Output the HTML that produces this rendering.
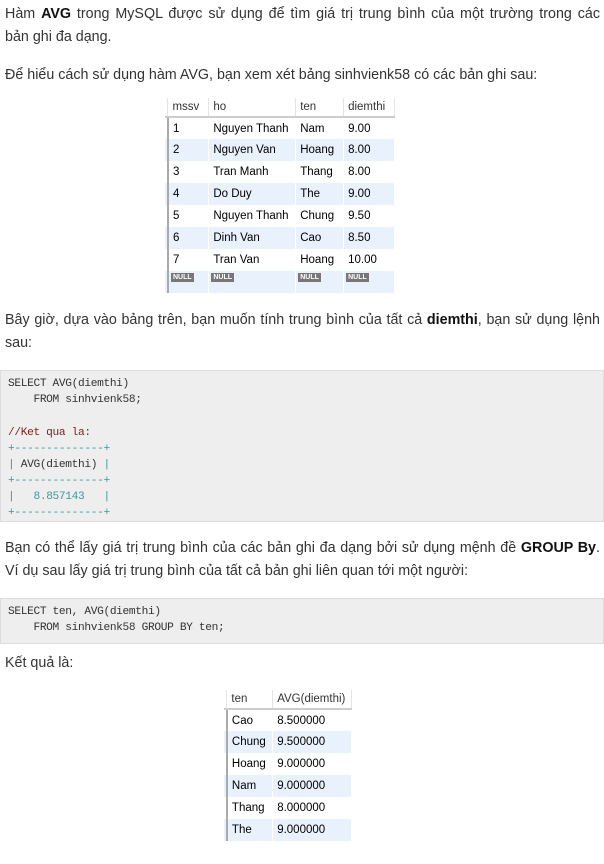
<!DOCTYPE html>
<html><head><meta charset="utf-8"><style>
body{margin:0;width:604px;height:864px;background:#fff;position:relative;font-family:"Liberation Sans",sans-serif;color:#333;overflow:hidden}
.l{position:absolute;left:5px;font-size:14.3px;white-space:nowrap;line-height:18px}
.j{width:595px;text-align:justify;text-align-last:justify}
b{color:#111}
.code{position:absolute;left:0;width:602px;background:#eee;border:1px solid #ddd;font-family:"Liberation Mono",monospace;font-size:11.2px;letter-spacing:-0.35px;color:#333}
.code div{position:absolute;left:7px;white-space:pre;line-height:14px}
.c{color:#7a1f1f}.g{color:#3a9a9a}
table{position:absolute;border-collapse:collapse;font-size:11.5px;font-family:"Liberation Sans",sans-serif;color:#000}
td{height:22px;padding:0 0 0 4px;border-right:1px solid #fff;white-space:nowrap;box-sizing:border-box}
tr.h td{height:19px;color:#333;border-bottom:2px solid #ccc;border-right:1px solid #e4e4e4}
tr.a td{background:#e9f1fc}
td.gut{padding:0;border-right:2px solid #aaa;width:3px;background:#fff}
.nul{display:inline-block;background:#777;color:#fff;font-size:7px;font-weight:bold;padding:0 2px;line-height:9px;vertical-align:top;margin-top:2px}
</style></head><body>
<div class="l j" style="top:5px">Hàm <b>AVG</b> trong MySQL được sử dụng để tìm giá trị trung bình của một trường trong các</div>
<div class="l" style="top:28px">bản ghi đa dạng.</div>
<div class="l" style="top:66px">Để hiểu cách sử dụng hàm AVG, bạn xem xét bảng sinhvienk58 có các bản ghi sau:</div>

<table style="left:165px;top:98px;width:230px">
<tr class="h"><td class="gut"></td><td style="width:41px">mssv</td><td style="width:87px">ho</td><td style="width:48px">ten</td><td style="width:51px">diemthi</td></tr>
<tr><td class="gut"></td><td>1</td><td>Nguyen Thanh</td><td>Nam</td><td>9.00</td></tr>
<tr class="a"><td class="gut"></td><td>2</td><td>Nguyen Van</td><td>Hoang</td><td>8.00</td></tr>
<tr><td class="gut"></td><td>3</td><td>Tran Manh</td><td>Thang</td><td>8.00</td></tr>
<tr class="a"><td class="gut"></td><td>4</td><td>Do Duy</td><td>The</td><td>9.00</td></tr>
<tr><td class="gut"></td><td>5</td><td>Nguyen Thanh</td><td>Chung</td><td>9.50</td></tr>
<tr class="a"><td class="gut"></td><td>6</td><td>Dinh Van</td><td>Cao</td><td>8.50</td></tr>
<tr><td class="gut"></td><td>7</td><td>Tran Van</td><td>Hoang</td><td>10.00</td></tr>
<tr class="a"><td class="gut"></td><td style="padding-left:2px;vertical-align:top"><span class="nul">NULL</span></td><td style="padding-left:2px;vertical-align:top"><span class="nul">NULL</span></td><td style="padding-left:2px;vertical-align:top"><span class="nul">NULL</span></td><td style="padding-left:2px;vertical-align:top"><span class="nul">NULL</span></td></tr>
</table>

<div class="l j" style="top:311px">Bây giờ, dựa vào bảng trên, bạn muốn tính trung bình của tất cả <b>diemthi</b>, bạn sử dụng lệnh</div>
<div class="l" style="top:334px">sau:</div>

<div class="code" style="top:370px;height:150px">
<div style="top:6px">SELECT AVG(diemthi)</div>
<div style="top:22px">    FROM sinhvienk58;</div>
<div class="c" style="top:55px">//Ket qua la:</div>
<div class="g" style="top:71px">+--------------+</div>
<div style="top:87px"><span class="g">|</span> AVG(diemthi) <span class="g">|</span></div>
<div class="g" style="top:103px">+--------------+</div>
<div style="top:119px"><span class="g">|</span>   <span class="g">8.857143</span>   <span class="g">|</span></div>
<div class="g" style="top:135px">+--------------+</div>
</div>

<div class="l j" style="top:539px">Bạn có thể lấy giá trị trung bình của các bản ghi đa dạng bởi sử dụng mệnh đề <b>GROUP By</b>.</div>
<div class="l" style="top:562px">Ví dụ sau lấy giá trị trung bình của tất cả bản ghi liên quan tới một người:</div>

<div class="code" style="top:598px;height:44px">
<div style="top:6px">SELECT ten, AVG(diemthi)</div>
<div style="top:22px">    FROM sinhvienk58 GROUP BY ten;</div>
</div>

<div class="l" style="top:654px">Kết quả là:</div>

<table style="left:224px;top:690px;width:128px">
<tr class="h"><td class="gut"></td><td style="width:46px">ten</td><td style="width:79px">AVG(diemthi)</td></tr>
<tr><td class="gut"></td><td>Cao</td><td>8.500000</td></tr>
<tr class="a"><td class="gut"></td><td>Chung</td><td>9.500000</td></tr>
<tr><td class="gut"></td><td>Hoang</td><td>9.000000</td></tr>
<tr class="a"><td class="gut"></td><td>Nam</td><td>9.000000</td></tr>
<tr><td class="gut"></td><td>Thang</td><td>8.000000</td></tr>
<tr class="a"><td class="gut"></td><td>The</td><td>9.000000</td></tr>
</table>
</body></html>
